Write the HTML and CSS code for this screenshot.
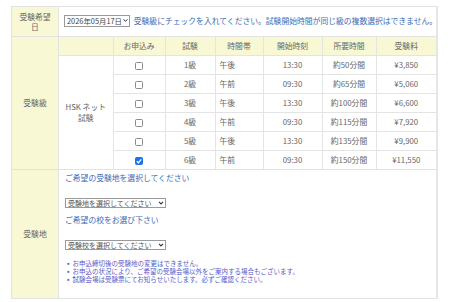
FILE: index.html
```html
<!DOCTYPE html>
<html lang="ja">
<head>
<meta charset="utf-8">
<title>受験申込</title>
<link rel="stylesheet" href="styles.css">
</head>
<body>
<div class="wrap">
<table class="form">
  <colgroup><col class="c-lab"><col class="c-val"></colgroup>
  <tr class="r-date">
    <th class="lab">受験希望<br>日</th>
    <td class="val date-cell">
      <span class="sel sel-date">2026年05月17日<svg class="chev" viewBox="0 0 8 6" width="7" height="5"><path d="M1 1.2 L4 4.3 L7 1.2" fill="none" stroke="#223" stroke-width="1.6"/></svg></span>
      <span class="note">受験級にチェックを入れてください。試験開始時間が同じ級の複数選択はできません。</span>
    </td>
  </tr>
  <tr class="r-grade">
    <th class="lab">受験級</th>
    <td class="inner-cell">
      <table class="grades">
        <colgroup>
          <col class="g1"><col class="g2"><col class="g3"><col class="g4"><col class="g5"><col class="g6"><col class="g7">
        </colgroup>
        <tr class="ghead">
          <th></th><th>お申込み</th><th>試験</th><th>時間帯</th><th>開始時刻</th><th>所要時間</th><th>受験料</th>
        </tr>
        <tr>
          <td rowspan="6" class="exam">HSK ネット<br>試験</td>
          <td><span class="cb"></span></td><td>1級</td><td class="l">午後</td><td>13:30</td><td>約50分間</td><td>¥3,850</td>
        </tr>
        <tr>
          <td><span class="cb"></span></td><td>2級</td><td class="l">午前</td><td>09:30</td><td>約65分間</td><td>¥5,060</td>
        </tr>
        <tr>
          <td><span class="cb"></span></td><td>3級</td><td class="l">午後</td><td>13:30</td><td>約100分間</td><td>¥6,600</td>
        </tr>
        <tr>
          <td><span class="cb"></span></td><td>4級</td><td class="l">午前</td><td>09:30</td><td>約115分間</td><td>¥7,920</td>
        </tr>
        <tr>
          <td><span class="cb"></span></td><td>5級</td><td class="l">午後</td><td>13:30</td><td>約135分間</td><td>¥9,900</td>
        </tr>
        <tr>
          <td><span class="cb on"><svg viewBox="0 0 8 8" width="8" height="8"><path d="M1.8 4.2 L3.4 5.8 L6.3 2.3" fill="none" stroke="#fff" stroke-width="1.3"/></svg></span></td><td>6級</td><td class="l">午前</td><td>09:30</td><td>約150分間</td><td>¥11,550</td>
        </tr>
      </table>
    </td>
  </tr>
  <tr class="r-place">
    <th class="lab">受験地</th>
    <td class="val place">
      <p class="q">ご希望の受験地を選択してください</p>
      <span class="sel sel-wide">受験地を選択してください<svg class="chev" viewBox="0 0 8 6" width="6" height="4"><path d="M1 1.2 L4 4.3 L7 1.2" fill="none" stroke="#335" stroke-width="1.6"/></svg></span>
      <p class="q q2">ご希望の校をお選び下さい</p>
      <span class="sel sel-wide">受験校を選択してください<svg class="chev" viewBox="0 0 8 6" width="6" height="4"><path d="M1 1.2 L4 4.3 L7 1.2" fill="none" stroke="#335" stroke-width="1.6"/></svg></span>
      <ul class="notes">
        <li>お申込締切後の受験地の変更はできません。</li>
        <li>お申込の状況により、ご希望の受験会場以外をご案内する場合もございます。</li>
        <li>試験会場は受験票にてお知らせいたします。必ずご確認ください。</li>
      </ul>
    </td>
  </tr>
</table>
<div class="next"></div>
</div>
</body>
</html>
```
FILE: styles.css
```css
html, body {
  margin: 0;
  padding: 0;
  background: #fff;
}
body {
  font-family: "Noto Sans CJK JP", "Noto Sans", sans-serif;
  font-size: 7.8px;
  color: #666;
}
.wrap {
  padding: 6px 0 0 11px;
  width: 428px;
}
.form {
  width: 427px;
  border-collapse: collapse;
  table-layout: fixed;
  border-right: 2px solid #e6e6e6;
}
.c-lab { width: 47px; }
.form > tbody > tr > th,
.form > tbody > tr > td {
  border: 1px solid #e2e2e2;
}
.lab {
  background: #f8f8d4;
  font-weight: normal;
  color: #666;
  text-align: center;
  vertical-align: middle;
  padding: 0;
  line-height: 10px;
}
.r-date > td, .r-date > th { height: 27px; }
.date-cell {
  padding: 0 0 2px 5px;
  vertical-align: middle;
  white-space: nowrap;
}
.sel {
  display: inline-flex;
  align-items: center;
  box-sizing: border-box;
  border: 1px solid #9a9a9a;
  background: #fff;
  color: #555;
  font-size: 7px;
  line-height: 8px;
  padding: 0 1px 0 2px;
  gap: 1px;
  vertical-align: middle;
}
.sel-date {
  width: 66px;
  height: 12px;
  font-size: 7.4px;
  color: #444;
}
.sel-date .chev { margin-left: auto; }
.note {
  color: #3b6cb5;
  vertical-align: middle;
  margin-left: 2px;
}
.inner-cell { padding: 0; }
.grades {
  width: 100%;
  border-collapse: collapse;
  table-layout: fixed;
  border-style: hidden;
}
.g1 { width: 54px; }
.g2 { width: 52px; }
.g3 { width: 50px; }
.g4 { width: 48px; }
.g5 { width: 59px; }
.g6 { width: 54px; }
.grades th, .grades td {
  border: 1px solid #e4e4e4;
  height: 18px;
  padding: 0;
  text-align: center;
  vertical-align: middle;
  font-weight: normal;
  color: #666;
  line-height: 10px;
}
.grades th { background: #f8f8d4; }
.grades td.l { text-align: left; padding-left: 4px; }
.grades td.exam { line-height: 11px; padding: 0 0 2px 0; }
.cb {
  display: inline-block;
  box-sizing: border-box;
  width: 8px;
  height: 8px;
  border: 1px solid #8a8a8a;
  border-radius: 1.5px;
  vertical-align: middle;
  background: #fff;
}
.cb.on {
  background: #1a73e8;
  border-color: #1a73e8;
  position: relative;
}
.cb.on svg {
  position: absolute;
  left: -1px;
  top: -1px;
}
.place {
  padding: 2px 6px 15px 6px;
  vertical-align: top;
}
.q {
  margin: 0;
  line-height: 12px;
  color: #3b6cb5;
}
.q2 { margin-top: 6px; }
.sel-wide {
  display: flex;
  width: 101px;
  height: 10px;
  margin-top: 14px;
}
.sel-wide .chev { margin-left: auto; }
.notes {
  list-style: none;
  margin: 9px 0 0 0;
  padding: 0;
  font-size: 6.5px;
  line-height: 8px;
  color: #5a5ac8;
}
.notes li::before {
  content: "\25AA";
  margin-right: 1px;
}
.next {
  margin-top: 3px;
  border-top: 1px solid #f2a7a7;
  height: 10px;
  background: #fff6f6;
}
```
